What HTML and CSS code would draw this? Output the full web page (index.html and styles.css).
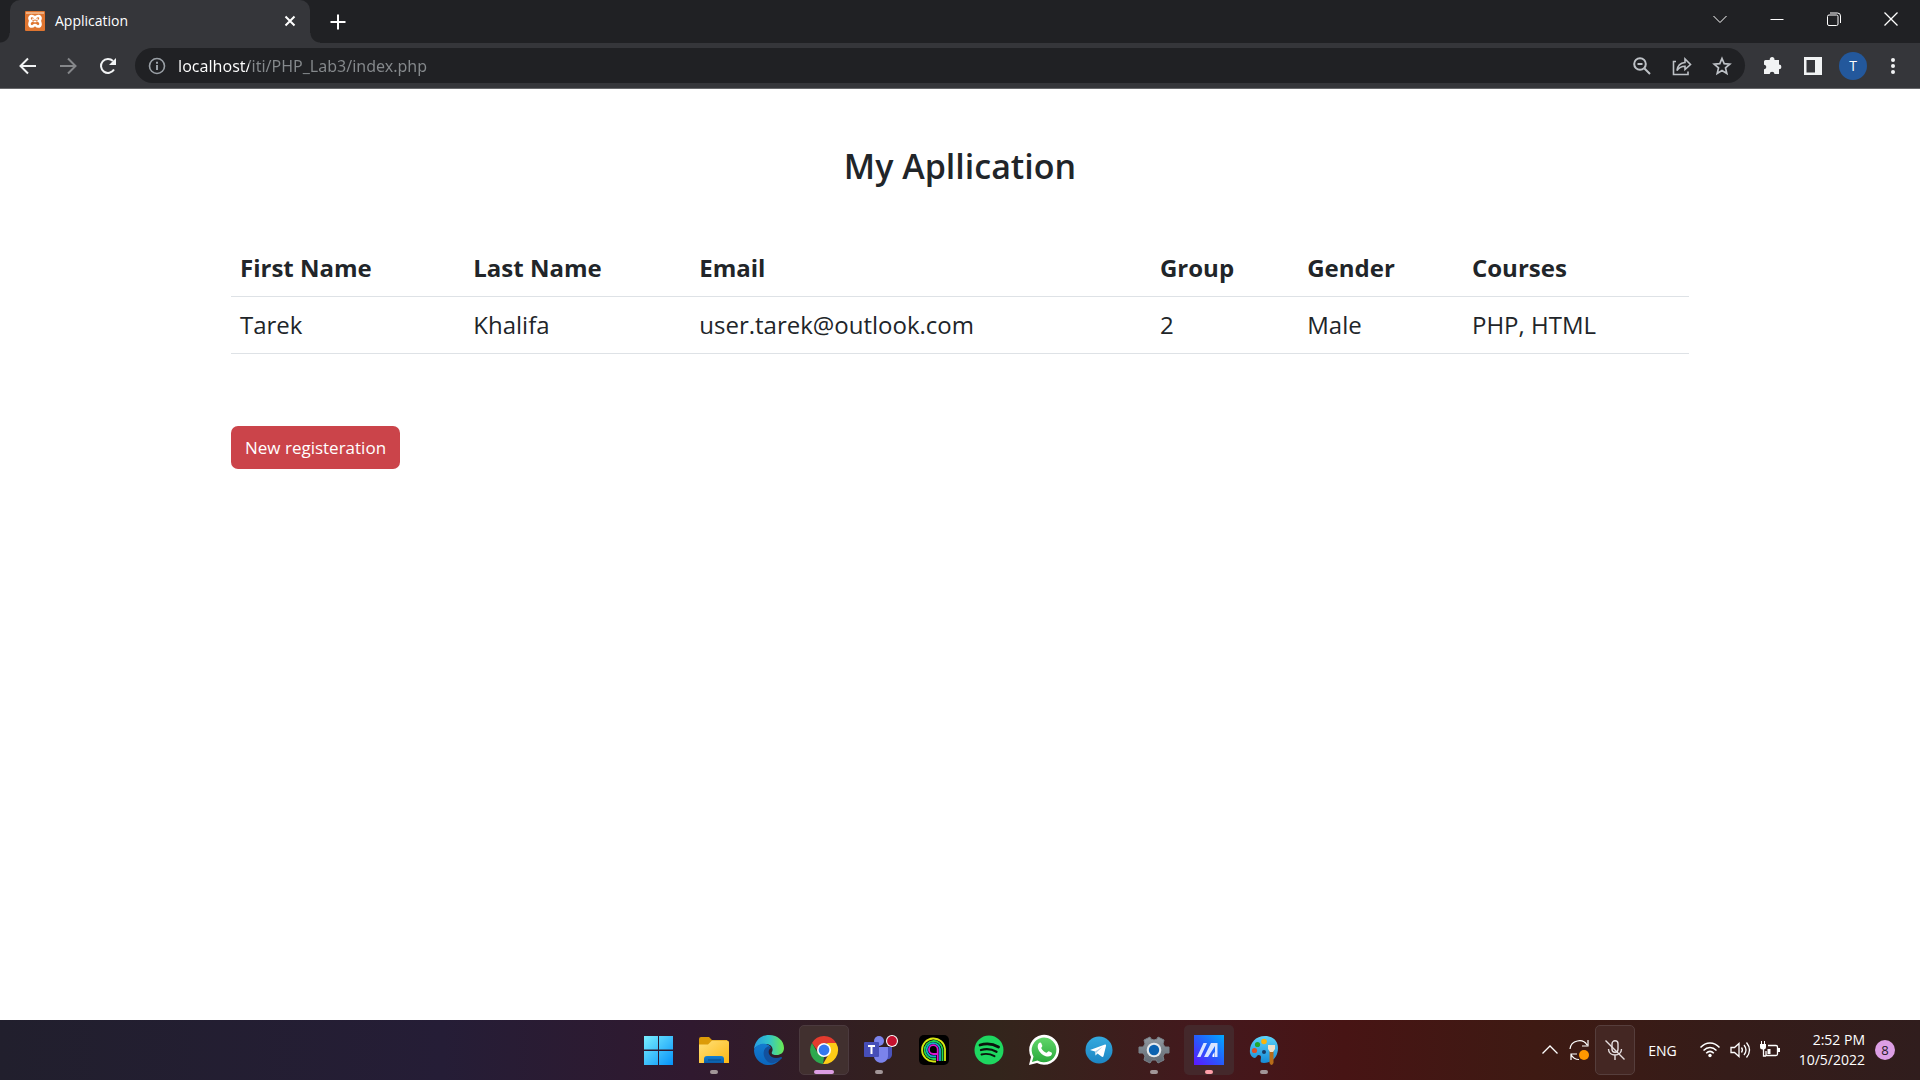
FILE: index.html
```html
<!DOCTYPE html>
<html lang="en">
<head>
<meta charset="utf-8">
<title>Application</title>
<link rel="stylesheet" href="styles.css">
</head>
<body>
<header class="browser">
  <div class="tabstrip">
    <div class="tab">
      <svg class="favicon" width="20" height="20" viewBox="0 0 20 20" aria-hidden="true"><rect width="20" height="20" rx="1" fill="#df7530"/><path d="M1 1h18v2H1z" fill="#edae80"/><path d="M10 7C8.500 4.200 4 4.500 4.500 7.500c.2 1.500 1 2 1.500 2.500-2 1-2.500 5.500 1 5.500 2 0 1.500-1.500 3-1.500s1 1.500 3 1.500c3.500 0 3-4.500 1-5.500.5-.5 1.300-1 1.500-2.500C16 4.500 11.500 4.200 10 7z" fill="none" stroke="#fff" stroke-width="2.600"/><path d="M8.500 10.500h3M8.500 9l-1-1.500M11.500 9l1-1.500" stroke="#fff" stroke-width="1.500"/></svg>
      <span class="tab-title">Application</span>
      <button class="icon-btn tab-close" aria-label="Close tab"><svg width="12" height="12" viewBox="0 0 12 12"><path d="M1.500 1.500l9 9M10.500 1.500l-9 9" stroke="#fff" stroke-width="2"/></svg></button>
    </div>
    <button class="icon-btn new-tab" aria-label="New tab"><svg width="16" height="16" viewBox="0 0 16 16"><path d="M8 .5v15M.5 8h15" stroke="#fff" stroke-width="2"/></svg></button>
    <div class="window-controls">
      <button class="icon-btn" aria-label="Search tabs"><svg width="14" height="14" viewBox="0 0 14 14" fill="none" stroke="#fff"><path d="M.5 4L7 10.500 13.500 4"/></svg></button>
      <button class="icon-btn" aria-label="Minimize"><svg width="14" height="14" viewBox="0 0 14 14"><path d="M.5 7.500h13" stroke="#fff"/></svg></button>
      <button class="icon-btn" aria-label="Restore"><svg width="14" height="14" viewBox="0 0 14 14" fill="none" stroke="#fff"><rect x=".5" y="3" width="10.500" height="10.500" rx="1.500"/><path d="M3 1h7.500a3 3 0 0 1 3 3v7"/></svg></button>
      <button class="icon-btn" aria-label="Close"><svg width="14" height="14" viewBox="0 0 14 14"><path d="M.5.5l13 13M13.500.5l-13 13" stroke="#fff" stroke-width="1.300"/></svg></button>
    </div>
  </div>
  <div class="toolbar">
    <div class="nav">
      <button class="icon-btn" aria-label="Back"><svg width="18" height="18" viewBox="0 0 18 18" fill="none" stroke="#f1f3f4" stroke-width="2"><path d="M17 9H2M9 1.500L1.500 9 9 16.500"/></svg></button>
      <button class="icon-btn" aria-label="Forward"><svg width="18" height="18" viewBox="0 0 18 18" fill="none" stroke="#85878a" stroke-width="2"><path d="M1 9h15M9 1.500L16.500 9 9 16.500"/></svg></button>
      <button class="icon-btn" aria-label="Reload"><svg width="18" height="18" viewBox="0 0 18 18"><path d="M15 12.500A7 7 0 1 1 14 4" fill="none" stroke="#f1f3f4" stroke-width="2"/><path d="M17 1v7h-7z" fill="#f1f3f4"/></svg></button>
    </div>
    <div class="omnibox">
      <button class="icon-btn" aria-label="Site information"><svg width="18" height="18" viewBox="0 0 18 18"><circle cx="9" cy="9" r="7.500" fill="none" stroke="#9aa0a6" stroke-width="1.600"/><path d="M9 8v5M9 4.700v2" stroke="#9aa0a6" stroke-width="2"/></svg></button>
      <input class="url" type="text" aria-label="Address" value="localhost/iti/PHP_Lab3/index.php">
      <button class="icon-btn" aria-label="Zoom"><svg width="20" height="20" viewBox="0 0 20 20" fill="none" stroke="#bdc1c6" stroke-width="2"><circle cx="8" cy="8" r="5.800"/><path d="M5.500 8h5M12.500 12.500l5.500 5.500"/></svg></button>
      <button class="icon-btn" aria-label="Share"><svg width="20" height="20" viewBox="0 0 20 20" fill="none" stroke="#bdc1c6" stroke-width="1.600"><path d="M4 5.500H1.500v13H16v-3M5 14.500c.5-5 3-7.500 8-8V3l5.500 5.500-5.500 5v-3.200c-4 0-6 1.200-8 4.200z"/></svg></button>
      <button class="icon-btn" aria-label="Bookmark"><svg width="20" height="20" viewBox="0 0 20 20" fill="none" stroke="#bdc1c6" stroke-width="1.700"><path d="M10 2.500l2.200 5.200 5.600.5-4.300 3.700 1.300 5.500-4.800-2.900-4.800 2.900 1.300-5.500-4.300-3.700 5.600-.5z"/></svg></button>
    </div>
    <div class="tools">
      <button class="icon-btn" aria-label="Extensions"><svg width="20" height="20" viewBox="0 0 20 20"><path d="M2.500 4h4.300a2.400 2.400 0 1 1 4.600 0H16v4.500a2.400 2.400 0 1 1 0 4.800V18h-4.600c0-3-4.600-3-4.600 0H1v-4.700c3 0 3-4.600 0-4.600V5.500Q1 4 2.500 4z" fill="#f1f3f4"/></svg></button>
      <button class="icon-btn" aria-label="Side panel"><svg width="18" height="18" viewBox="0 0 18 18"><path d="M0 0h18v18H0zM2.500 3v12.500H11V3z" fill="#f1f3f4" fill-rule="evenodd"/></svg></button>
      <button class="avatar" aria-label="Profile T">T</button>
      <button class="icon-btn" aria-label="Menu"><svg width="18" height="18" viewBox="0 0 18 18" fill="#f1f3f4"><circle cx="9" cy="3" r="2"/><circle cx="9" cy="9" r="2"/><circle cx="9" cy="15" r="2"/></svg></button>
    </div>
  </div>
</header>

<main class="page">
  <div class="container">
    <h1 class="heading">My Apllication</h1>
    <table class="people">
      <colgroup><col class="col-first"><col class="col-last"><col class="col-email"><col class="col-group"><col class="col-gender"><col class="col-courses"></colgroup>
      <thead><tr><th scope="col">First Name</th><th scope="col">Last Name</th><th scope="col">Email</th><th scope="col">Group</th><th scope="col">Gender</th><th scope="col">Courses</th></tr></thead>
      <tbody><tr><td>Tarek</td><td>Khalifa</td><td>user.tarek@outlook.com</td><td>2</td><td>Male</td><td>PHP, HTML</td></tr></tbody>
    </table>
    <button class="register">New registeration</button>
  </div>
</main>

<footer class="taskbar">
  <div class="apps">
    <button class="app" aria-label="Start"><svg width="30" height="30" viewBox="0 0 30 30"><defs><linearGradient id="win" x1="0" y1="0" x2="29" y2="29" gradientUnits="userSpaceOnUse"><stop stop-color="#7bf0ff"/><stop offset="1" stop-color="#0794f8"/></linearGradient></defs><path d="M0 1h14v13.500H0zM15 1h14v13.500H15zM0 16h14v14H0zM15 16h14v14H15z" fill="url(#win)"/></svg></button>
    <button class="app running" aria-label="File Explorer"><svg width="30" height="30" viewBox="0 0 30 30"><defs><linearGradient id="fold" x2="1" y2="1"><stop stop-color="#ffe07a"/><stop offset="1" stop-color="#fdb813"/></linearGradient><linearGradient id="tray" x2="0" y2="1"><stop stop-color="#1380d2"/><stop offset="1" stop-color="#0b5ca8"/></linearGradient></defs><path d="M0 4q0-2 2-2h8l3 3h15v8H0z" fill="#dc9b08"/><path d="M0 9.500h9l4-4h15q2 0 2 2V28H0z" fill="url(#fold)"/><path d="M5 28v-4q0-3 3-3h14q3 0 3 3v4z" fill="url(#tray)"/><path d="M9 25h13" stroke="#084b86"/></svg></button>
    <button class="app" aria-label="Edge"><svg width="30" height="30" viewBox="0 0 30 30"><defs><linearGradient id="edgeTop"><stop stop-color="#269be2"/><stop offset=".5" stop-color="#32c5ca"/><stop offset="1" stop-color="#6bea50"/></linearGradient><linearGradient id="edgeLow" x2="0" y2="1"><stop stop-color="#137bd0"/><stop offset="1" stop-color="#0b66bd"/></linearGradient></defs><path d="M0 14C1 5 7 0 15 0c9 0 15 6 15 13 0 5-4 7-7 7-4 0-6-1-5-3 2-4-1-8-6-8-5 0-9 2-12 5z" fill="url(#edgeTop)"/><path d="M0 15c2-5 7-7 12-6 2 .3 4 2 5 4-6-2-8 4-6 8s8 7 15 4c-3 3-7 5-11 5C6 30 0 23 0 15z" fill="url(#edgeLow)"/><path d="M13 12c-5 3-4 10 0 14 3 3 7 3 13-1 3-2 2-3 1-3-5 2-10 1-12-3-1-3 0-5 2-6-1-2-3-2-4-1z" fill="#12519e"/></svg></button>
    <button class="app running active" aria-label="Chrome"><svg width="30" height="30" viewBox="0 0 30 30"><path d="M15 1a14 14 0 0 1 12.100 7H15l-7 7-5-7A14 14 0 0 1 15 1z" fill="#e33b2e"/><path d="M3 8l6 10.500L15 22l-1 7A14 14 0 0 1 3 8z" fill="#2da94f"/><path d="M27.100 8A14 14 0 0 1 14 29l7-12-3-9z" fill="#fdcc16"/><circle cx="15" cy="15" r="7" fill="#fff"/><circle cx="15" cy="15" r="5.400" fill="#3478ee"/></svg></button>
    <button class="app running" aria-label="Teams"><svg width="36" height="30" viewBox="0 0 36 30"><circle cx="18" cy="6" r="5" fill="#7b83eb"/><path d="M24 12h7v8q-1 5-6 4z" fill="#4b53bc"/><path d="M13 12h14v9c0 9-14 9-14 0z" fill="#7b83eb"/><rect x="3" y="7" width="15" height="15" rx="1" fill="#464eb8"/><path d="M7 11h7M10.500 11v8" stroke="#fff" stroke-width="2"/><circle cx="31" cy="6" r="6" fill="#fff"/><circle cx="31" cy="6" r="4.900" fill="#c4122f"/></svg></button>
    <button class="app" aria-label="Audials"><svg width="30" height="30" viewBox="0 0 30 30" fill="none" stroke-width="1.800"><rect width="30" height="30" rx="5" fill="#000"/><path d="M26 26V14A11.500 11.500 0 1 0 14.500 26.500H17" stroke="#d6e812"/><path d="M23.500 26V14A9 9 0 1 0 14.500 24H17" stroke="#20d34d"/><path d="M21 26V14A6.700 6.700 0 1 0 14.500 21.500H17" stroke="#16a8cc"/><path d="M18.700 26V14A4.400 4.400 0 1 0 14.500 19H18" stroke="#dc16d4"/></svg></button>
    <button class="app" aria-label="Spotify"><svg width="30" height="30" viewBox="0 0 30 30" fill="none" stroke="#0b130d" stroke-linecap="round"><circle cx="15" cy="15" r="14.500" fill="#1ed760" stroke="none"/><path d="M6 10c6-1.800 13-1.200 18.500 2" stroke-width="2.800"/><path d="M7 15c5.500-1.600 11-.8 15.500 1.700" stroke-width="2.300"/><path d="M7.500 19.500c5-1.300 9-.5 13 1.700" stroke-width="1.900"/></svg></button>
    <button class="app" aria-label="WhatsApp"><svg width="30" height="30" viewBox="0 0 30 30"><defs><linearGradient id="wa" x2="0" y2="1"><stop stop-color="#60d669"/><stop offset="1" stop-color="#2aa93c"/></linearGradient></defs><path d="M0 30l2-8A15 15 0 1 1 8 28z" fill="#fff"/><path d="M3 27l1.500-5.500A12.400 12.400 0 1 1 8.500 25.500z" fill="url(#wa)"/><path d="M10 8c1-1 2-.5 2.300.3l1 2.500c.3.900-1.300 1.800-1 2.400 1.200 2.200 2.800 3.600 5 4.500.8.300 1.700-1.800 2.600-1.400l2.600 1.300c1 .5.300 2.500-.7 3.200C16 24.500 5 14 10 8z" fill="#fff"/></svg></button>
    <button class="app" aria-label="Telegram"><svg width="30" height="30" viewBox="0 0 30 30"><defs><linearGradient id="tg" x2="0" y2="1"><stop stop-color="#34aadf"/><stop offset="1" stop-color="#1c85c3"/></linearGradient></defs><circle cx="15" cy="15" r="13.500" fill="url(#tg)"/><path d="M6 15l15-5.500q1.500-.4 1 1.500l-2.500 10q-.5 1.500-2 .5l-4-3-2 2-.500-4z" fill="#fff"/><path d="M11 16.500l7.500-4.700-6 5.800-.8 3z" fill="#a8cfe6"/></svg></button>
    <button class="app running" aria-label="Settings"><svg width="30" height="30" viewBox="0 0 30 30"><defs><linearGradient id="gear" x2="0" y2="1"><stop stop-color="#929aa1"/><stop offset="1" stop-color="#606972"/></linearGradient></defs><path d="M12 4l-1-2-6 3 1 4-2 3H0v6h4l2 3-1 4 6 3 2-3h4l2 3 6-3-1-4 2-3h4v-6h-4l-2-3 1-4-6-3-1 2-3 1z" fill="url(#gear)" stroke="#79828a" stroke-linejoin="round"/><circle cx="15" cy="15" r="7.300" fill="#e4e9ed"/><circle cx="15" cy="15" r="5.200" fill="#0a62b0"/></svg></button>
    <button class="app running hot" aria-label="MyASUS"><svg width="30" height="30" viewBox="0 0 30 30"><defs><linearGradient id="asus" x1="0" y1="1" x2="1" y2="0"><stop stop-color="#5d16ff"/><stop offset=".5" stop-color="#265cfb"/><stop offset="1" stop-color="#00aaff"/></linearGradient></defs><path d="M0 0h30v30H0z" fill="url(#asus)"/><path d="M3 22L9.500 8H13L6.500 22zM10 22l7-14h6.500v14H21V11l-7 11z" fill="#d9e4ff"/><path d="M18.500 20l2-3v5h-2z" fill="#fff"/></svg></button>
    <button class="app running" aria-label="Paint"><svg width="30" height="30" viewBox="0 0 30 30"><defs><linearGradient id="paint" x2="0" y2="1"><stop stop-color="#5cd3fa"/><stop offset="1" stop-color="#168bd7"/></linearGradient></defs><path d="M16 1c8 0 13 5 13 12 0 9-6 15-14 15-5 0-3-3-3-6 0-2-3-3-4-1-2 4-6 1-7-3C0 9 6 1 16 1z" fill="url(#paint)"/><circle cx="15" cy="6.500" r="2.800" fill="#f8b40c"/><circle cx="8.500" cy="9.500" r="2.600" fill="#22a82c"/><circle cx="5.500" cy="15.500" r="2.600" fill="#dc5129"/><circle cx="15" cy="17" r="2" fill="#173d68"/><path d="M20.500 15h4v13q-2 4-4 0z" fill="#b76c19"/><path d="M19 10h7v4l-2 3h-3l-2-3z" fill="#eee1cc"/></svg></button>
  </div>
  <div class="tray">
    <button class="tray-btn" aria-label="Show hidden icons"><svg width="18" height="18" viewBox="0 0 18 18" fill="none" stroke="#fff" stroke-width="1.300"><path d="M1.500 12.500L9 5l7.500 7.500"/></svg></button>
    <button class="tray-btn sync" aria-label="Updates"><svg width="20" height="20" viewBox="0 0 20 20" fill="none" stroke="#fff" stroke-width="1.200"><path d="M1 9C2 0 14-2 18 5M19 0v6h-6M2 20v-6h6M2 14.500c2 4 5 5 8 5"/><circle cx="15" cy="15" r="5" fill="#ff9800" stroke="none"/></svg></button>
    <button class="tray-btn mic" aria-label="Microphone muted"><svg width="20" height="20" viewBox="0 0 20 20" fill="none" stroke="#e6dfe0" stroke-width="1.400"><rect x="7" y=".8" width="6" height="11.500" rx="3"/><path d="M3.500 9c0 8 13 8 13 0M10 15v5M.5.5l19 19"/></svg></button>
    <button class="tray-btn lang">ENG</button>
    <div class="status">
      <svg width="20" height="20" viewBox="0 0 20 20" fill="none" stroke="#fff" stroke-width="1.500"><path d="M.5 7.500c5.500-6 13.500-6 19 0M3.500 10.500c4-4 9-4 13 0M6.200 13.200c2.300-2.300 5.300-2.300 7.600 0"/><circle cx="10" cy="15.500" r="1.700" fill="#fff" stroke="none"/></svg>
      <svg width="20" height="20" viewBox="0 0 20 20" fill="none" stroke="#fff" stroke-width="1.300"><path d="M1 7.500h3.500L9 3.500v13l-4.500-4H1zM11.500 7.500q1.800 2.500 0 5M14 5q4 5 0 10M16.500 2.500q6 7.500 0 15"/></svg>
      <svg width="20" height="20" viewBox="0 0 20 20" fill="none" stroke="#fff" stroke-width="1.300"><path d="M8 5.500h8q1.500 0 1.500 1.500v7q0 1.500-1.500 1.500H6V11M3.500 9v7H6"/><path d="M0 4h1V1h1v3h2V1h1v3h1v3q0 2.500-3 2.500T0 7zM7.500 9h3v5h-3zM18 8h2v4h-2z" fill="#fff" stroke="none"/></svg>
    </div>
    <time class="clock" datetime="2022-10-05T14:52"><span>2:52 PM</span><span>10/5/2022</span></time>
    <span class="badge">8</span>
  </div>
</footer>
</body>
</html>
```
FILE: styles.css
```css
* { box-sizing: border-box; }

body {
  margin: 0;
  min-height: 100vh;
  display: flex;
  flex-direction: column;
  background: #fff;
  color: #212529;
  font-family: "Open Sans", "Noto Sans", sans-serif;
}

button {
  margin: 0;
  padding: 0;
  border: 0;
  background: none;
  color: inherit;
  font: inherit;
}

svg { display: block; flex: none; overflow: visible; }

.icon-btn { display: flex; align-items: center; justify-content: center; flex: none; }

/* Browser window */
.browser { background: #35363a; border-bottom: 1px solid #67686b; }

.tabstrip {
  display: flex;
  height: 43px;
  padding: 0 1px 0 10px;
  background: #202124;
  color: #fff;
}

.tab {
  position: relative;
  display: flex;
  align-items: center;
  gap: 10px;
  width: 300px;
  padding: 0 14px 2px 15px;
  border-radius: 10px 10px 0 0;
  background: #35363a;
}

.tab::before,
.tab::after {
  content: "";
  position: absolute;
  bottom: 0;
  width: 10px;
  height: 10px;
}
.tab::before { right: 100%; background: radial-gradient(circle at 0 0, #202124 9px, #35363a 10px); }
.tab::after { left: 100%; background: radial-gradient(circle at 100% 0, #202124 9px, #35363a 10px); }

.tab-title { flex: 1; font-size: 14px; line-height: 20px; }
.new-tab { margin-left: 20px; }

.window-controls { display: flex; margin-left: auto; padding-bottom: 6px; }
.window-controls .icon-btn { width: 57px; }

.toolbar { display: flex; align-items: center; height: 45px; }
.nav { display: flex; padding: 0 7px 0 8px; }
.nav .icon-btn { width: 40px; height: 34px; }

.omnibox {
  flex: 1;
  display: flex;
  align-items: center;
  height: 35px;
  padding: 0 13px;
  border-radius: 18px;
  background: #202124;
}
.omnibox .icon-btn + .icon-btn { margin-left: 20px; }

.url {
  flex: 1;
  min-width: 0;
  margin-left: 12px;
  padding: 0;
  border: 0;
  outline: 0;
  background: linear-gradient(90deg, #fff 71px, #85898c 71px);
  background-clip: text;
  color: transparent;
  font: 16px/24px "Noto Sans", "Open Sans", sans-serif;
}

.tools { display: flex; align-items: center; padding-left: 8px; padding-right: 7px; }
.tools .icon-btn { width: 40px; }

.avatar {
  width: 28px;
  height: 28px;
  margin: 0 6px;
  border-radius: 50%;
  background: #23589c;
  color: #fff;
  font-size: 14px;
}

/* Page */
.page { flex: 1; padding: 53px 24px; }
.container { max-width: 1458px; margin: 0 auto; }

.heading {
  margin: 0 0 50px;
  font-size: 34px;
  font-weight: 600;
  line-height: 48px;
  text-align: center;
}

.people {
  width: 100%;
  margin-bottom: 72px;
  border-collapse: collapse;
  table-layout: fixed;
  font-size: 24px;
  line-height: 38px;
}
.people th,
.people td {
  padding: 9px;
  border-bottom: 1px solid #dee2e6;
  text-align: left;
}
.people th { font-weight: 700; }

.col-first { width: 16%; }
.col-last, .col-courses { width: 15.5%; }
.col-email { width: 31.6%; }
.col-group { width: 10.1%; }
.col-gender { width: 11.3%; }

.register {
  padding: 8px 14px;
  border-radius: 7px;
  background: #cb444a;
  color: #fff;
  font-size: 17px;
  line-height: 27px;
}

/* Taskbar */
.taskbar {
  display: grid;
  grid-template-columns: 1fr auto 1fr;
  align-items: center;
  height: 60px;
  background: linear-gradient(90deg, #211f2d 0%, #251d36 23%, #30192f 36%, #33201f 46%, #33251c 52%, #44181d 63%, #471414 70%, #3e1a13 80%, #351c19 90%, #301d1d 100%);
  color: #fff;
}

.apps { grid-column: 2; display: flex; gap: 5px; padding-left: 2px; }

.app {
  position: relative;
  display: flex;
  align-items: center;
  justify-content: center;
  width: 50px;
  height: 50px;
  border: 1px solid transparent;
  border-radius: 5px;
}
.app.running::after {
  content: "";
  position: absolute;
  left: 20px;
  bottom: 0;
  width: 8px;
  height: 4px;
  border-radius: 2px;
  background: #a29698;
}
.app.active { border-color: #4b3a3e; background: #41302f; }
.app.active::after { left: 14px; width: 20px; background: #dc9ee4; }
.app.hot { background: #44282b; }
.app.hot::after { background: #ff9fa9; }

.tray {
  justify-self: end;
  display: flex;
  align-items: center;
  padding-right: 25px;
}
.tray-btn { display: flex; align-items: center; justify-content: center; height: 50px; }
.sync { margin: 0 6px 0 10px; }
.mic { width: 40px; border: 1px solid #563e3c; border-radius: 5px; background: #442723; }
.lang { margin: 0 23px 0 13px; font-size: 14px; }
.status { display: flex; gap: 10px; }
.clock {
  display: flex;
  flex-direction: column;
  align-items: flex-end;
  margin: 0 10px 0 19px;
  font-size: 14px;
  line-height: 20px;
}
.badge {
  width: 20px;
  height: 20px;
  border-radius: 50%;
  background: #dc9ee4;
  color: #241a26;
  font-size: 13px;
  line-height: 20px;
  text-align: center;
}
```
